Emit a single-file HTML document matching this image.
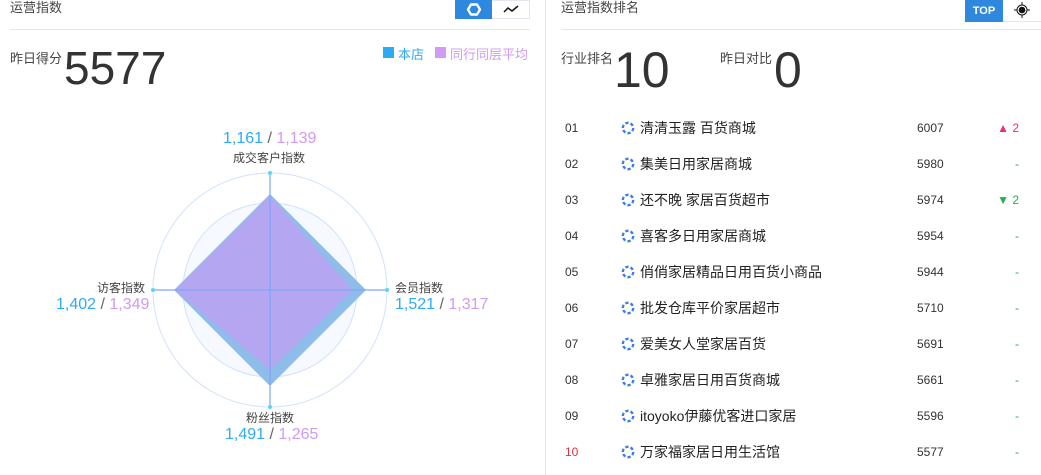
<!DOCTYPE html>
<html><head><meta charset="utf-8"><style>
*{margin:0;padding:0;box-sizing:border-box}
body{width:1041px;height:475px;background:#fff;position:relative;overflow:hidden;font-family:"Liberation Sans","Noto Sans CJK SC",sans-serif;color:#333}
.a{position:absolute;white-space:nowrap}
.t{font-size:13px;color:#444}
.big{font-size:50px;color:#333;line-height:1}
.row{position:absolute;left:565px;width:476px;height:20px;font-size:13px;line-height:20px}
.row .n{position:absolute;left:0;font-size:12px;color:#333}
.row .ic{position:absolute;left:56px;top:3px}
.row .nm{position:absolute;left:75px;font-size:14px;color:#222}
.row .s{position:absolute;left:352px;font-size:12px;color:#333}
.row .c{position:absolute;left:394px;width:60px;text-align:right;font-size:12px;color:#22b14c}
</style></head><body>
<div class="a t" style="left:10px;top:-3px">运营指数</div>
<div class="a" style="left:455px;top:0;width:37px;height:19px;background:#2e88dd"></div>
<svg class="a" style="left:464px;top:1px" width="20" height="17" viewBox="0 0 20 17"><polygon points="7,3.5 13,3.5 16,8.5 13,13.5 7,13.5 4,8.5" fill="none" stroke="#fff" stroke-width="2.4" stroke-linejoin="round"/></svg>
<div class="a" style="left:492px;top:0;width:38px;height:19px;border:1px solid #e3e8ef;border-left:none"></div>
<svg class="a" style="left:502px;top:3px" width="20" height="12"><polyline points="2,9 6,5 10,8 16,3" fill="none" stroke="#111" stroke-width="1.5"/></svg>
<div class="a" style="left:10px;top:29px;width:520px;height:1px;background:#e3e8ef"></div>
<div class="a t" style="left:10px;top:48px">昨日得分</div>
<div class="a big" style="left:64px;top:45px;font-size:46px">5577</div>
<div class="a" style="left:383px;top:47px;width:11px;height:11px;background:#2eaaf5"></div>
<div class="a" style="left:398px;top:44px;font-size:13px;color:#2eaaf5">本店</div>
<div class="a" style="left:435px;top:47px;width:11px;height:11px;background:#d09af5"></div>
<div class="a" style="left:450px;top:44px;font-size:13px;color:#d09af5">同行同层平均</div>

<svg class="a" style="left:0;top:0" width="545" height="475">
<circle cx="270" cy="290" r="87" fill="#f6f9ff"/>
<circle cx="270" cy="290" r="117" fill="none" stroke="#cfe3fb" stroke-width="1"/>
<circle cx="270" cy="290" r="87" fill="none" stroke="#cfe3fb" stroke-width="1"/>
<circle cx="270" cy="290" r="58" fill="none" stroke="#dde9f9" stroke-width="1"/>
<circle cx="270" cy="290" r="29" fill="none" stroke="#dde9f9" stroke-width="1"/>
<polygon points="270,194 366,290 270,386 174,290" fill="#8fbdea"/>
<polygon points="270,196 353,290 270,370 175,290" fill="#b5a6f2"/>
<line x1="270" y1="173" x2="270" y2="407" stroke="#7aa8ff" stroke-width="1.2"/>
<line x1="153" y1="290" x2="387" y2="290" stroke="#7aa8ff" stroke-width="1.2"/>
<circle cx="270" cy="173" r="2" fill="#5cd3ff"/><circle cx="270" cy="407" r="2" fill="#5cd3ff"/>
<circle cx="153" cy="290" r="2" fill="#5cd3ff"/><circle cx="387" cy="290" r="2" fill="#5cd3ff"/>
</svg>
<div class="a" style="left:223px;top:130px;font-size:16px"><span style="color:#2eaaf5">1,161</span> <span style="color:#666">/</span> <span style="color:#d09af5">1,139</span></div>
<div class="a t" style="left:233px;top:149px;font-size:12px">成交客户指数</div>
<div class="a t" style="left:97px;top:279px;font-size:12px">访客指数</div>
<div class="a" style="left:56px;top:296px;font-size:16px"><span style="color:#2eaaf5">1,402</span> <span style="color:#666">/</span> <span style="color:#d09af5">1,349</span></div>
<div class="a t" style="left:395px;top:279px;font-size:12px">会员指数</div>
<div class="a" style="left:395px;top:296px;font-size:16px"><span style="color:#2eaaf5">1,521</span> <span style="color:#666">/</span> <span style="color:#d09af5">1,317</span></div>
<div class="a t" style="left:246px;top:409px;font-size:12px">粉丝指数</div>
<div class="a" style="left:225px;top:426px;font-size:16px"><span style="color:#2eaaf5">1,491</span> <span style="color:#666">/</span> <span style="color:#d09af5">1,265</span></div>

<div class="a" style="left:545px;top:0;width:1px;height:475px;background:#e3e8ef"></div>

<div class="a t" style="left:561px;top:-3px">运营指数排名</div>
<div class="a" style="left:965px;top:0;width:38px;height:22px;background:#2e88dd;color:#fff;font-weight:bold;font-size:11px;text-align:center;line-height:22px">TOP</div>
<div class="a" style="left:1003px;top:0;width:38px;height:22px;border-bottom:1px solid #e3e8ef"></div>
<svg class="a" style="left:1013px;top:1px" width="18" height="18"><line x1="9" y1="1" x2="9" y2="17" stroke="#111" stroke-width="1"/><line x1="1" y1="9" x2="17" y2="9" stroke="#111" stroke-width="1"/><circle cx="9" cy="9" r="5" fill="#fff" stroke="#111"/><circle cx="9" cy="9" r="3.3" fill="#111"/></svg>
<div class="a" style="left:561px;top:29px;width:480px;height:1px;background:#e3e8ef"></div>
<div class="a t" style="left:561px;top:48px">行业排名</div>
<div class="a big" style="left:614px;top:45px">10</div>
<div class="a t" style="left:720px;top:48px">昨日对比</div>
<div class="a big" style="left:774px;top:45px">0</div>

<svg width="0" height="0" style="position:absolute"><defs><g id="ic"><circle cx="7" cy="7" r="5.2" fill="none" stroke="#3d7fe0" stroke-width="2.4" stroke-dasharray="3.3 2.1"/></g></defs></svg>

<div class="row" style="top:118px"><span class="n">01</span><svg class="ic" width="14" height="14"><use href="#ic"/></svg><span class="nm">清清玉露 百货商城</span><span class="s">6007</span><span class="c" style="color:#f0306a">▲ 2</span></div>
<div class="row" style="top:154px"><span class="n">02</span><svg class="ic" width="14" height="14"><use href="#ic"/></svg><span class="nm">集美日用家居商城</span><span class="s">5980</span><span class="c">-</span></div>
<div class="row" style="top:190px"><span class="n">03</span><svg class="ic" width="14" height="14"><use href="#ic"/></svg><span class="nm">还不晚 家居百货超市</span><span class="s">5974</span><span class="c">▼ 2</span></div>
<div class="row" style="top:226px"><span class="n">04</span><svg class="ic" width="14" height="14"><use href="#ic"/></svg><span class="nm">喜客多日用家居商城</span><span class="s">5954</span><span class="c">-</span></div>
<div class="row" style="top:262px"><span class="n">05</span><svg class="ic" width="14" height="14"><use href="#ic"/></svg><span class="nm">俏俏家居精品日用百货小商品</span><span class="s">5944</span><span class="c">-</span></div>
<div class="row" style="top:298px"><span class="n">06</span><svg class="ic" width="14" height="14"><use href="#ic"/></svg><span class="nm">批发仓库平价家居超市</span><span class="s">5710</span><span class="c">-</span></div>
<div class="row" style="top:334px"><span class="n">07</span><svg class="ic" width="14" height="14"><use href="#ic"/></svg><span class="nm">爱美女人堂家居百货</span><span class="s">5691</span><span class="c">-</span></div>
<div class="row" style="top:370px"><span class="n">08</span><svg class="ic" width="14" height="14"><use href="#ic"/></svg><span class="nm">卓雅家居日用百货商城</span><span class="s">5661</span><span class="c">-</span></div>
<div class="row" style="top:406px"><span class="n">09</span><svg class="ic" width="14" height="14"><use href="#ic"/></svg><span class="nm">itoyoko伊藤优客进口家居</span><span class="s">5596</span><span class="c">-</span></div>
<div class="row" style="top:442px"><span class="n" style="color:#e0303a">10</span><svg class="ic" width="14" height="14"><use href="#ic"/></svg><span class="nm">万家福家居日用生活馆</span><span class="s">5577</span><span class="c">-</span></div>
</body></html>
